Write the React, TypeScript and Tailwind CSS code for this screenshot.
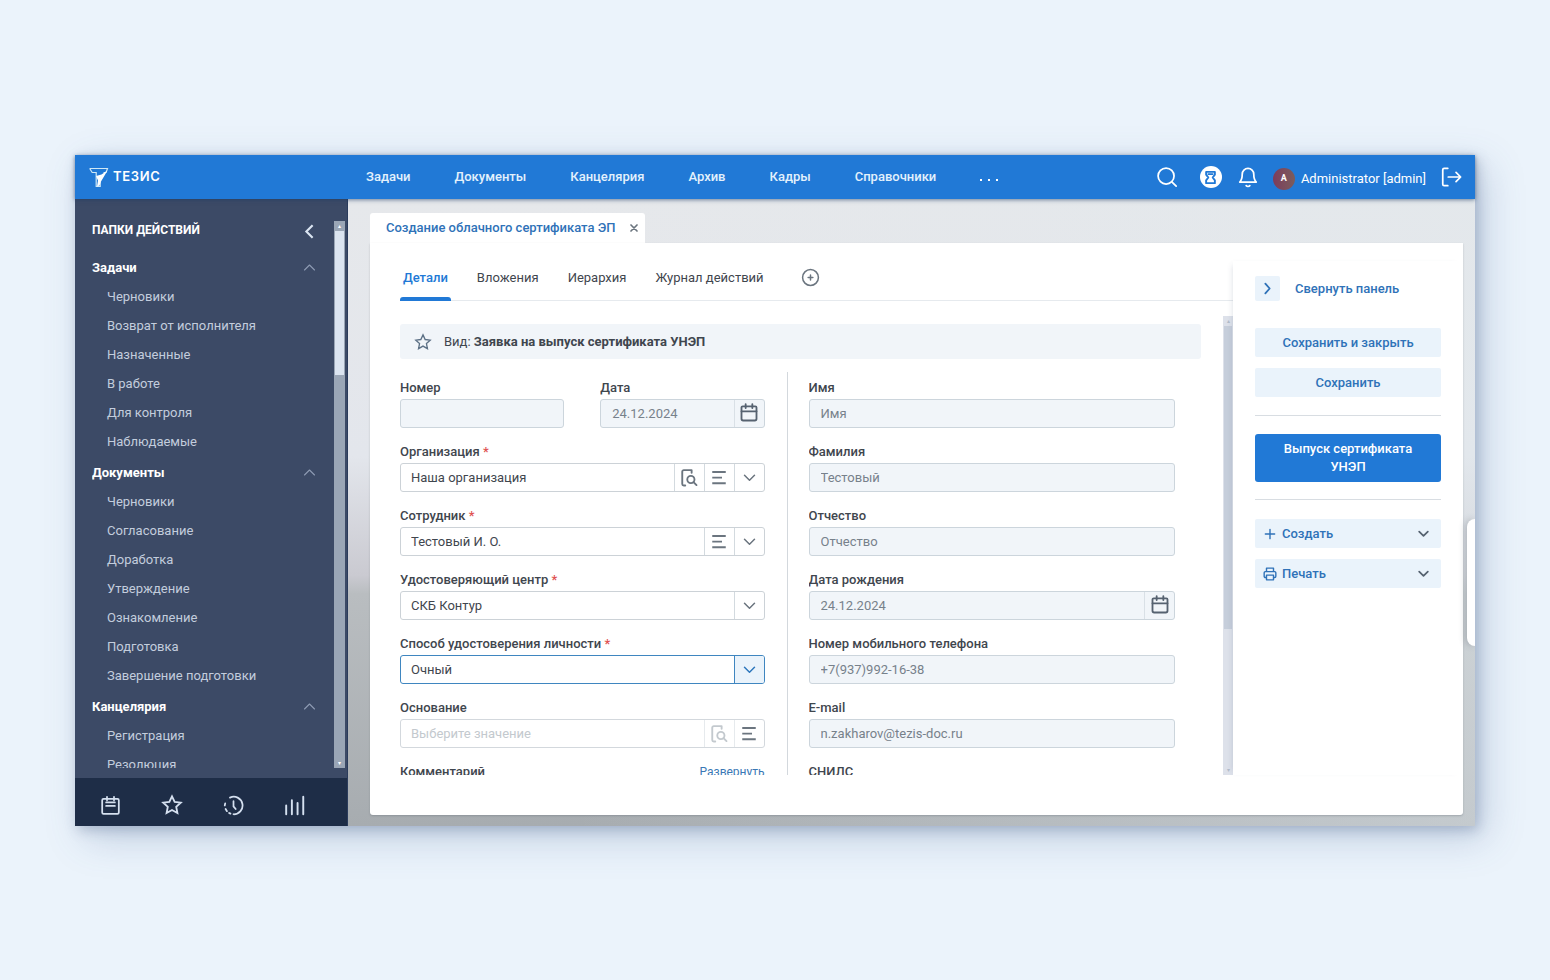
import { ReactNode } from 'react';
import clsx from 'clsx';

interface IconProps {
    className?: string;
    size?: number;
    stroke?: number;
    children?: ReactNode;
}

const Icon = ({ className, size = 20, stroke = 2, children }: IconProps) => (
    <svg className={clsx('shrink-0', className)} width={size} height={size} viewBox="0 0 24 24" fill="none" stroke="currentColor" strokeWidth={stroke} strokeLinecap="round" strokeLinejoin="round" aria-hidden="true">
        {children}
    </svg>
);

const ChevronDown = (props: IconProps) => (
    <Icon {...props}>
        <path d="M4 8.500l8 8 8-8" />
    </Icon>
);

const ChevronUp = (props: IconProps) => (
    <Icon {...props}>
        <path d="M4 16l8-8 8 8" />
    </Icon>
);

const Star = (props: IconProps) => (
    <Icon {...props}>
        <path d="M12 2.500l2.900 6.200 6.700.8-5 4.600 1.300 6.700-5.900-3.300-5.900 3.300 1.300-6.700-5-4.600 6.700-.8z" strokeLinejoin="miter" />
    </Icon>
);

const Calendar = (props: IconProps) => (
    <Icon {...props}>
        <path d="M4.500 4h15A1.500 1.500 0 0 1 21 5.500V19a2 2 0 0 1-2 2H5a2 2 0 0 1-2-2V5.500A1.500 1.500 0 0 1 4.500 4z" />
        <path d="M3 10h18M8 1.500V6M16 1.500V6" />
    </Icon>
);

const Lines = () => (
    <Icon size={18} stroke={2.6}>
        <path d="M3 4h18M3 11.500h13M3 19h18" strokeLinecap="butt" />
    </Icon>
);

const Lookup = () => (
    <Icon size={18} stroke={2.5}>
        <path d="M7 22H5a2 2 0 0 1-2-2V3.500A2 2 0 0 1 5 1.500h10.500v3.500" />
        <circle cx="14.500" cy="14" r="4.800" />
        <path d="M18 17.500L22 21.500" />
    </Icon>
);

const Logo = () => (
    <svg width="20" height="21" viewBox="0 0 20 21" fill="none" aria-hidden="true">
        <path d="M.7 1.500h17.800l-1.500 4h-2.500M.7 1.500l2.500 4h4v14h4V15" stroke="#cfe8f5" strokeWidth="1.200" />
        <path d="M18.500 3.500L12 14.500l-1.500 4-2.500 1 1-6-2-4.500 5.500-1.500z" fill="#fff" />
    </svg>
);

const menu = ['Задачи', 'Документы', 'Канцелярия', 'Архив', 'Кадры', 'Справочники'];

const folders = [
    { title: 'Задачи', items: ['Черновики', 'Возврат от исполнителя', 'Назначенные', 'В работе', 'Для контроля', 'Наблюдаемые'] },
    { title: 'Документы', items: ['Черновики', 'Согласование', 'Доработка', 'Утверждение', 'Ознакомление', 'Подготовка', 'Завершение подготовки'] },
    { title: 'Канцелярия', items: ['Регистрация', 'Резолюция'] },
];

const Header = () => (
    <header className="relative z-10 flex h-11 shrink-0 items-center bg-[#2179d6] pl-[14px] pr-[13px] text-[13px] font-medium text-[#e3f1fc] shadow-[0_1px_4px_rgba(30,60,100,0.6)]">
        <a href="#" className="flex w-[277px] items-center gap-1 text-white">
            <Logo />
            <span className="font-[Inter,sans-serif] text-[13px] font-semibold tracking-wider">ТЕЗИС</span>
        </a>
        <nav className="flex items-center gap-11">
            {menu.map((item) => (
                <a key={item} href="#">
                    {item}
                </a>
            ))}
            <button type="button" aria-label="Ещё" className="flex gap-[6px] pt-[6px]">
                <span className="size-[2px] bg-white" />
                <span className="size-[2px] bg-white" />
                <span className="size-[2px] bg-white" />
            </button>
        </nav>
        <div className="ml-auto flex items-center text-white">
            <button type="button" aria-label="Поиск">
                <Icon size={22} stroke={1.900}>
                    <circle cx="11" cy="11" r="8.700" />
                    <path d="M17.500 17.500L22 22" />
                </Icon>
            </button>
            <button type="button" aria-label="Замещение" className="ml-[22px] flex size-[22px] items-center justify-center rounded-full bg-white text-[#2179d6]">
                <Icon size={15} stroke={3}>
                    <path d="M5 3h14v4.500L15.500 12l3.500 4.500V21H5v-4.500L8.500 12 5 7.500z" />
                    <path d="M8.500 6.500h7" />
                </Icon>
            </button>
            <button type="button" aria-label="Уведомления" className="ml-[15px]">
                <Icon size={22} stroke={1.900}>
                    <path d="M3 17.500h18c-2-2-2.700-4-2.700-8.500a6.300 6.300 0 0 0-12.600 0c0 4.500-.7 6.500-2.700 8.500z" />
                    <path d="M10 21.500c1 1 3 1 4 0" />
                </Icon>
            </button>
            <span className="ml-[14px] mt-1 flex size-[22px] items-center justify-center rounded-full bg-linear-to-r from-[#7c3c5c] to-[#7a5c5c] text-[9px] font-bold">A</span>
            <span className="ml-[6px] mt-1 text-[13px] font-normal">Administrator [admin]</span>
            <button type="button" aria-label="Выйти" className="ml-[14px]">
                <Icon size={22} stroke={1.900}>
                    <path d="M8.500 2.500H4.500A1.500 1.500 0 0 0 3 4v16a1.500 1.500 0 0 0 1.500 1.500h4M9 12h13M17.500 7l5 5-5 5" />
                </Icon>
            </button>
        </div>
    </header>
);

const Sidebar = () => (
    <aside className="flex w-[273px] shrink-0 flex-col border-r border-[#2b3c5c] bg-[#3c4a66] text-[13px] text-[#c3cddd]">
        <div className="flex min-h-0 flex-1 pt-[22px] pb-[10px] pl-[17px] pr-[2px]">
            <div className="min-w-0 flex-1 overflow-hidden pr-[17px]">
                <div className="mb-[14px] flex h-[18px] items-center justify-between text-white">
                    <h2 className="text-[12px] font-bold">ПАПКИ ДЕЙСТВИЙ</h2>
                    <button type="button" aria-label="Свернуть" className="pt-[3px] text-[#dbe5f2]">
                        <Icon size={15} stroke={3.400}>
                            <path d="M17 2L7 12l10 10" strokeLinecap="butt" strokeLinejoin="miter" />
                        </Icon>
                    </button>
                </div>
                {folders.map((group) => (
                    <section key={group.title} className="mb-[2px]">
                        <h3 className="flex h-[29px] items-center justify-between font-bold text-white">
                            {group.title}
                            <ChevronUp size={15} stroke={1.800} className="text-[#8d9bb3]" />
                        </h3>
                        <ul>
                            {group.items.map((item) => (
                                <li key={item} className="flex h-[29px] items-center pl-[15px]">
                                    <a href="#">{item}</a>
                                </li>
                            ))}
                        </ul>
                    </section>
                ))}
            </div>
            <div aria-hidden="true" className="flex w-[11px] flex-col bg-[#9aa6b6]">
                <span className="flex h-[10px] items-center justify-center text-[6px] leading-none text-white">▴</span>
                <span className="mx-px h-[144px] bg-[#dbe4f0]" />
                <span className="mt-auto flex h-[10px] items-center justify-center text-[6px] leading-none text-white">▾</span>
            </div>
        </div>
        <div className="flex h-12 items-center gap-10 bg-[#1e2d47] pl-[25px] pt-[6px] text-[#d5e0f0]">
            <button type="button" aria-label="Календарь">
                <Icon size={21}>
                    <path d="M4 4.500h16a1.500 1.500 0 0 1 1.500 1.500v14a1.500 1.500 0 0 1-1.500 1.500H4A1.500 1.500 0 0 1 2.500 20V6A1.500 1.500 0 0 1 4 4.500zM8 2v4M16 2v4M7 8.500h10M7 12.500h10" />
                </Icon>
            </button>
            <button type="button" aria-label="Избранное">
                <Star size={22} />
            </button>
            <button type="button" aria-label="История">
                <Icon size={21}>
                    <path d="M8 3a10 10 0 1 1 4 19M2.500 9.500L2 12M3 16l1.500 2.500M7 20.500l1.500.8M12 7v6l2.500 3" />
                </Icon>
            </button>
            <button type="button" aria-label="Отчёты">
                <Icon size={21} stroke={2.200}>
                    <path d="M2.500 12v10M9 6v16M15.500 9v13M22 2v20" />
                </Icon>
            </button>
        </div>
    </aside>
);

interface FieldProps {
    id: string;
    label: string;
    required?: boolean;
    children: ReactNode;
}

const Field = ({ id, label, required, children }: FieldProps) => (
    <div className="mb-[14px] flex min-w-0 flex-1 flex-col gap-px">
        <label htmlFor={id} className="h-5 truncate text-[13px] leading-5 font-medium text-[#3f464e]">
            {label} {required && <span className="text-[#e05252]">*</span>}
        </label>
        {children}
    </div>
);

const frame = 'flex h-[29px] overflow-hidden rounded-[3px] border';
const cell = 'flex w-[30px] shrink-0 items-center justify-center border-l';

const TextField = ({ id, label, value, calendar }: { id: string; label: string; value: string; calendar?: boolean }) => (
    <Field id={id} label={label}>
        <div className={clsx(frame, 'border-[#ccd5dc] bg-[#f1f5f9]')}>
            <input id={id} readOnly defaultValue={value} className="min-w-0 flex-1 px-[11px] text-[13px] text-[#77818b] outline-none" />
            {calendar && (
                <button type="button" aria-label="Выбрать дату" className={clsx(cell, 'border-[#d9e0e6] pb-[2px] text-[#566270]')}>
                    <Calendar size={20} stroke={2.200} />
                </button>
            )}
        </div>
    </Field>
);

interface SelectProps {
    id: string;
    label: string;
    value: string;
    lookup?: boolean;
    list?: boolean;
    active?: boolean;
}

const SelectField = ({ id, label, value, lookup, list, active }: SelectProps) => (
    <Field id={id} label={label} required>
        <div className={clsx(frame, 'bg-white text-[#6b757f]', active ? 'border-[#3f86c0]' : 'border-[#ccd2d7]')}>
            <select id={id} className="min-w-0 flex-1 appearance-none px-[10px] text-[13px] text-[#3f464e] outline-none">
                <option>{value}</option>
            </select>
            {lookup && (
                <button type="button" aria-label="Открыть" className={clsx(cell, 'border-[#d3dadf]')}>
                    <Lookup />
                </button>
            )}
            {list && (
                <button type="button" aria-label="Выбрать" className={clsx(cell, 'border-[#d3dadf]')}>
                    <Lines />
                </button>
            )}
            <span className={clsx(cell, active ? 'border-[#3f86c0] bg-[#eaf3fb] text-[#2f78bd]' : 'border-[#d3dadf]')}>
                <ChevronDown size={15} stroke={2.400} />
            </span>
        </div>
    </Field>
);

const tabs = ['Детали', 'Вложения', 'Иерархия', 'Журнал действий'];

const Details = () => (
    <div className="flex min-h-0 flex-1">
        <div className="min-w-0 flex-1 overflow-hidden pt-2 pr-[22px]">
            <div className="flex h-[35px] items-center rounded-[3px] bg-[#f1f5f9] pl-[14px] text-[13px] text-[#3f464e]">
                <Star size={18} stroke={1.800} className="mr-3 text-[#5d7186]" />
                <span>
                    Вид: <b>Заявка на выпуск сертификата УНЭП</b>
                </span>
            </div>
            <form className="mt-[13px] mr-[26px] grid grid-cols-2">
                <div className="min-w-0 border-r border-[#d3d8dd] pt-[6px] pr-[22px]">
                    <div className="flex gap-9">
                        <TextField id="number" label="Номер" value="" />
                        <TextField id="date" label="Дата" value="24.12.2024" calendar />
                    </div>
                    <SelectField id="org" label="Организация" value="Наша организация" lookup list />
                    <SelectField id="employee" label="Сотрудник" value="Тестовый И. О." list />
                    <SelectField id="center" label="Удостоверяющий центр" value="СКБ Контур" />
                    <SelectField id="method" label="Способ удостоверения личности" value="Очный" active />
                    <Field id="reason" label="Основание">
                        <div className={clsx(frame, 'border-[#d3d8dd] bg-white')}>
                            <input id="reason" placeholder="Выберите значение" className="min-w-0 flex-1 px-[10px] text-[13px] outline-none placeholder:text-[#c3c9ce]" />
                            <button type="button" disabled aria-label="Открыть" className={clsx(cell, 'border-[#e6eaed] text-[#c3c9ce]')}>
                                <Lookup />
                            </button>
                            <button type="button" aria-label="Выбрать" className={clsx(cell, 'border-[#e6eaed] text-[#6b757f]')}>
                                <Lines />
                            </button>
                        </div>
                    </Field>
                    <div className="flex justify-between text-[13px] leading-5">
                        <span className="font-medium text-[#3f464e]">Комментарий</span>
                        <a href="#" className="text-[12px] text-[#3a78b5]">
                            Развернуть
                        </a>
                    </div>
                </div>
                <div className="min-w-0 pt-[6px] pl-[21px]">
                    <TextField id="name" label="Имя" value="Имя" />
                    <TextField id="surname" label="Фамилия" value="Тестовый" />
                    <TextField id="patronymic" label="Отчество" value="Отчество" />
                    <TextField id="birthday" label="Дата рождения" value="24.12.2024" calendar />
                    <TextField id="phone" label="Номер мобильного телефона" value="+7(937)992-16-38" />
                    <TextField id="email" label="E-mail" value="n.zakharov@tezis-doc.ru" />
                    <span className="block text-[13px] leading-5 font-medium text-[#3f464e]">СНИЛС</span>
                </div>
            </form>
        </div>
        <div aria-hidden="true" className="flex w-[10px] flex-col bg-[#dde1ea]">
            <span className="flex h-[10px] items-center justify-center text-[6px] leading-none text-[#b3bccb]">▴</span>
            <span className="mx-px h-[303px] bg-[#c6cedb]" />
            <span className="mt-auto flex h-[10px] items-center justify-center text-[6px] leading-none text-[#b3bccb]">▾</span>
        </div>
    </div>
);

const action = 'flex h-[29px] w-full items-center rounded-[2px] bg-[#eaf3fb]';

const ActionPanel = () => (
    <div className="mt-[18px] mb-10 flex w-[230px] shrink-0 flex-col bg-white px-[22px] pt-[15px] text-[13px] font-medium text-[#2f72b8] shadow-[-4px_0_6px_-4px_rgba(60,80,110,0.18)]">
        <button type="button" className="flex items-center gap-[15px]">
            <span className="flex size-[25px] items-center justify-center rounded-[2px] bg-[#eaf3fb]">
                <Icon size={13} stroke={3.400}>
                    <path d="M8 3l8 9-8 9" />
                </Icon>
            </span>
            Свернуть панель
        </button>
        <button type="button" className={clsx(action, 'mt-[27px] justify-center')}>
            Сохранить и закрыть
        </button>
        <button type="button" className={clsx(action, 'mt-[11px] justify-center')}>
            Сохранить
        </button>
        <hr className="my-[18px] border-[#d8dde2]" />
        <button type="button" className="h-12 rounded-[3px] bg-[#2179d6] px-5 leading-[18px] text-white">
            Выпуск сертификата УНЭП
        </button>
        <hr className="mt-[17px] mb-[19px] border-[#d8dde2]" />
        <button type="button" className={clsx(action, 'gap-[5px] px-2')}>
            <Icon size={14} stroke={2.400}>
                <path d="M12 4v16M4 12h16" />
            </Icon>
            Создать
            <ChevronDown size={13} stroke={3.200} className="ml-auto mr-[3px] text-[#566270]" />
        </button>
        <button type="button" className={clsx(action, 'mt-[11px] gap-[5px] px-2')}>
            <Icon size={14} stroke={2.400}>
                <path d="M6 8V2h12v6M6 18H4a2 2 0 0 1-2-2v-6a2 2 0 0 1 2-2h16a2 2 0 0 1 2 2v6a2 2 0 0 1-2 2h-2M6 14h12v8H6z" />
            </Icon>
            Печать
            <ChevronDown size={13} stroke={3.200} className="ml-auto mr-[3px] text-[#566270]" />
        </button>
    </div>
);

export default function App() {
    return (
        <div className="h-screen bg-[#ebf3fb] px-[75px] pt-[155px] pb-[154px] font-[Roboto,sans-serif]">
            <div className="flex h-full flex-col shadow-[10px_12px_36px_rgba(70,100,150,0.26),3px_4px_12px_rgba(70,90,130,0.3)]">
                <Header />
                <div className="flex min-h-0 flex-1">
                    <Sidebar />
                    <main className="relative flex min-w-0 flex-1 flex-col overflow-hidden bg-[linear-gradient(to_right,transparent_20%,rgba(225,232,236,0.5)),linear-gradient(to_bottom,#e6e8eb,#e3e6ec_41%,#cacad1_60%,#b9bdc0_63%,#a7acb0)] pt-[14px] pr-3 pb-[11px] pl-[22px]">
                        <div className="flex h-[30px] w-[275px] shrink-0 items-center justify-between rounded-t-[3px] bg-white pr-[7px] pl-4 text-[13px] font-medium text-[#2f72b8]">
                            Создание облачного сертификата ЭП
                            <button type="button" aria-label="Закрыть" className="text-[#6b757f]">
                                <Icon size={8} stroke={5}>
                                    <path d="M3 3l18 18M21 3L3 21" />
                                </Icon>
                            </button>
                        </div>
                        <div className="flex min-h-0 flex-1 rounded-b-[3px] bg-white shadow-[0_1px_2px_rgba(80,90,100,0.3)]">
                            <div className="flex min-w-0 flex-1 flex-col pt-3 pb-10 pl-[30px]">
                                <div role="tablist" className="mb-[15px] flex h-[46px] shrink-0 items-stretch gap-[23px] border-b border-[#e6eaee] text-[13px] text-[#3f464e]">
                                    {tabs.map((tab, i) => (
                                        <button key={tab} type="button" role="tab" aria-selected={i === 0} className={clsx('-mb-px px-[3px]', i === 0 ? 'relative font-medium text-[#2179d6]' : '')}>
                                            {tab}
                                            {i === 0 && <span className="absolute inset-x-0 bottom-0 h-1 rounded-t-[3px] bg-[#2179d6]" />}
                                        </button>
                                    ))}
                                    <button type="button" aria-label="Добавить" className="ml-[11px] text-[#6b757f]">
                                        <Icon size={19} stroke={1.900}>
                                            <circle cx="12" cy="12" r="10" />
                                            <path d="M12 9v6M9 12h6" />
                                        </Icon>
                                    </button>
                                </div>
                                <Details />
                            </div>
                            <ActionPanel />
                        </div>
                        <button type="button" aria-label="Открыть панель" className="absolute right-0 top-[320px] h-[127px] w-2 rounded-l-[8px] bg-white shadow-[-2px_0_6px_rgba(80,90,100,0.3)]" />
                    </main>
                </div>
            </div>
        </div>
    );
}
